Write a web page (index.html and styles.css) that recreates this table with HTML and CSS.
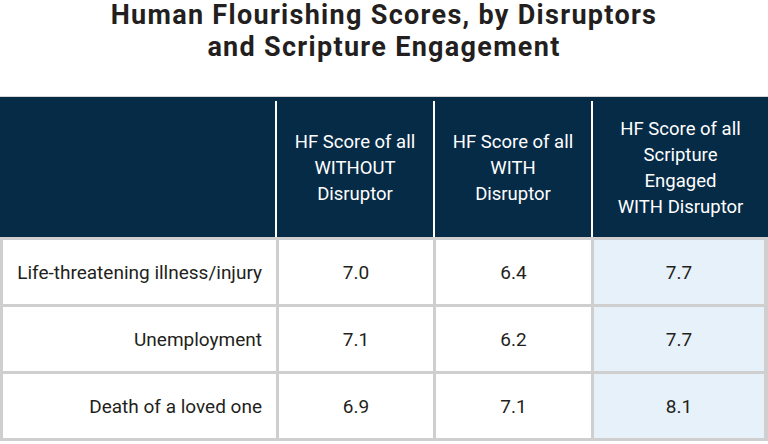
FILE: index.html
```html
<!DOCTYPE html>
<html lang="en">
<head>
<meta charset="utf-8">
<title>Human Flourishing Scores</title>
<link rel="stylesheet" href="styles.css">
</head>
<body>
<h1 class="title"><span class="line1">Human Flourishing Scores, by Disruptors</span><span class="line2">and Scripture Engagement</span></h1>
<div class="table">
  <div class="thead">
    <div class="hrow">
      <div class="hcell"></div>
      <div class="hcell">HF Score of all<br>WITHOUT<br>Disruptor</div>
      <div class="hcell">HF Score of all<br>WITH<br>Disruptor</div>
      <div class="hcell">HF Score of all<br>Scripture<br>Engaged<br>WITH Disruptor</div>
    </div>
  </div>
  <div class="tbody">
    <div class="cell label">Life-threatening illness/injury</div>
    <div class="cell">7.0</div>
    <div class="cell">6.4</div>
    <div class="cell hl">7.7</div>
    <div class="cell label">Unemployment</div>
    <div class="cell">7.1</div>
    <div class="cell">6.2</div>
    <div class="cell hl">7.7</div>
    <div class="cell label">Death of a loved one</div>
    <div class="cell">6.9</div>
    <div class="cell">7.1</div>
    <div class="cell hl">8.1</div>
  </div>
</div>
</body>
</html>
```
FILE: styles.css
```css
html, body {
  margin: 0;
  padding: 0;
  background: #ffffff;
}
body {
  width: 768px;
  height: 444px;
  overflow: hidden;
  font-family: Roboto, "Liberation Sans", sans-serif;
  color: #231f20;
}
.title {
  margin: 0;
  height: 96px;
  box-sizing: border-box;
  text-align: center;
  font-size: 27px;
  font-weight: 700;
  letter-spacing: 1.3px;
  color: #231f20;
}
.line1 {
  display: block;
  line-height: 31px;
}
.line2 {
  display: block;
  line-height: 33px;
}
.table {
  width: 768px;
}
.thead {
  background: #062b47;
  border-top: 1px solid #d6d6d6;
  padding-top: 4px;
}
.hrow {
  display: grid;
  grid-template-columns: 275px 156px 156px 175px;
  column-gap: 2px;
  background: #ffffff;
  height: 136px;
}
.hcell {
  background: #062b47;
  color: #ffffff;
  display: flex;
  align-items: center;
  justify-content: center;
  text-align: center;
  font-size: 18.5px;
  line-height: 26px;
  padding-bottom: 2px;
}
.tbody {
  display: grid;
  grid-template-columns: 273px 154px 155px 170px;
  grid-auto-rows: 64px;
  gap: 3px;
  background: #cfcfcf;
  padding: 3px 4px 3px 3px;
}
.cell {
  background: #ffffff;
  display: flex;
  align-items: center;
  justify-content: center;
  font-size: 19px;
  color: #231f20;
}
.cell.label {
  justify-content: flex-end;
  padding-right: 14px;
}
.cell.hl {
  background: #e7f1fa;
}
```
